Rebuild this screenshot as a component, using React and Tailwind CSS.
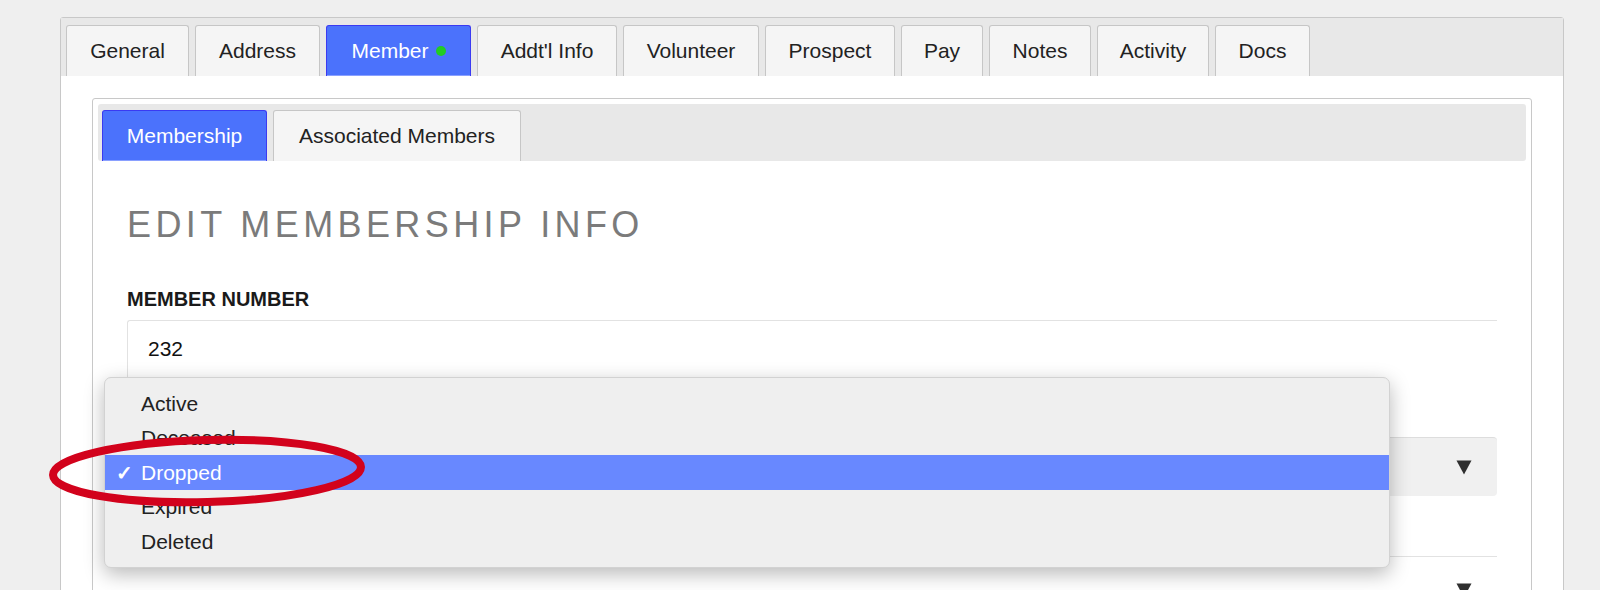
import React from "react";

const topTabs = [
  { label: "General", w: "w-[123px]" },
  { label: "Address", w: "w-[125px]" },
  { label: "Member", w: "w-[145px]", active: true },
  { label: "Addt'l Info", w: "w-[140px]" },
  { label: "Volunteer", w: "w-[136px]" },
  { label: "Prospect", w: "w-[130px]" },
  { label: "Pay", w: "w-[82px]" },
  { label: "Notes", w: "w-[102px]" },
  { label: "Activity", w: "w-[112px]" },
  { label: "Docs", w: "w-[95px]" },
];

const options = ["Active", "Deceased", "Dropped", "Expired", "Deleted"];

function Arrow() {
  return (
    <svg width="16" height="15" viewBox="0 0 16 15">
      <path d="M0.5 0.5 L15.5 0.5 L8 14.5 Z" fill="#2f2f2f" />
    </svg>
  );
}

function Tab({ label, w, active, children }) {
  return (
    <div
      className={
        "flex h-[51px] items-center justify-center gap-[7px] rounded-t-[3px] border border-b-0 text-[21px] " +
        w +
        " " +
        (active
          ? "border-[#3a3af2] bg-[#4b72fc] text-white shadow-[inset_0_-1px_0_#8aa0ff]"
          : "border-[#c6c6c6] bg-[#f5f5f5] text-[#222]")
      }
    >
      <span>{label}</span>
      {children}
    </div>
  );
}

export default function App() {
  return (
    <div
      className="relative h-[590px] w-[1600px] overflow-hidden bg-[#efefef]"
      style={{ fontFamily: '"Liberation Sans", Arial, sans-serif' }}
    >
      <div className="ml-[60px] mt-[17px] w-[1504px] rounded-t-[3px] border border-[#c8c8c8] bg-white">
        {/* top tab strip */}
        <div className="flex h-[58px] items-end gap-[6px] bg-[#e8e8e8] pl-[5px]">
          {topTabs.map((t) => (
            <Tab key={t.label} {...t}>
              {t.active && <span className="h-[10px] w-[10px] rounded-full bg-[#22cc22]" />}
            </Tab>
          ))}
        </div>

        {/* outer content */}
        <div className="px-[31px] pt-[22px]">
          <div className="h-[600px] rounded-[3px] border border-[#c8c8c8] bg-white">
            <div className="m-[5px] flex h-[57px] items-end gap-[6px] rounded-[3px] bg-[#e8e8e8] pl-[4px]">
              <Tab label="Membership" w="w-[165px]" active />
              <Tab label="Associated Members" w="w-[248px]" />
            </div>

            <div className="px-[34px] pt-[37px]">
              <h1 className="text-[36px] leading-[43px] font-normal tracking-[4.4px] text-[#7b7b7b]">
                EDIT MEMBERSHIP INFO
              </h1>
              <div className="mt-[41px] text-[20px] leading-[24px] font-bold text-[#1a1a1a]">
                MEMBER NUMBER
              </div>
              <div className="mt-[9px] flex h-[57px] items-center rounded-tl-[3px] border-l border-t border-[#e2e2e2] pl-[20px] text-[21px] text-[#111]">
                232
              </div>
              <div className="mt-[22px] h-[24px]" />
              <div className="mt-[14px] flex h-[59px] items-center justify-end rounded-[4px] border-t border-[#dddddd] bg-[#f0f0f0] pr-[25px]">
                <Arrow />
              </div>
              <div className="mt-[22px] h-[24px]" />
              <div className="mt-[14px] flex h-[59px] items-center justify-end border-t border-[#e2e2e2] pr-[25px] pt-[8px]">
                <Arrow />
              </div>
            </div>
          </div>
        </div>
      </div>

      {/* open dropdown popup */}
      <div className="absolute left-[104px] top-[377px] w-[1286px] rounded-[7px] border border-[#d2d2d2] bg-[#efefef] pt-[8px] pb-[8px] shadow-[0_6px_20px_rgba(0,0,0,0.28)]">
        {options.map((o) => {
          const sel = o === "Dropped";
          return (
            <div
              key={o}
              className={
                "relative flex h-[34.5px] items-center pl-[36px] text-[21px] " +
                (sel ? "bg-[#6888ff] text-white" : "text-[#222]")
              }
            >
              {sel && (
                <span className="absolute left-[11px] top-[3px] text-[20px] font-bold">✓</span>
              )}
              {o}
            </div>
          );
        })}
      </div>

      {/* red annotation ellipse */}
      <svg className="absolute left-0 top-0" width="1600" height="590" viewBox="0 0 1600 590">
        <ellipse
          cx="207"
          cy="471"
          rx="154"
          ry="31"
          fill="none"
          stroke="#d2021c"
          strokeWidth="8"
          transform="rotate(-1.5 207 471)"
        />
      </svg>
    </div>
  );
}
